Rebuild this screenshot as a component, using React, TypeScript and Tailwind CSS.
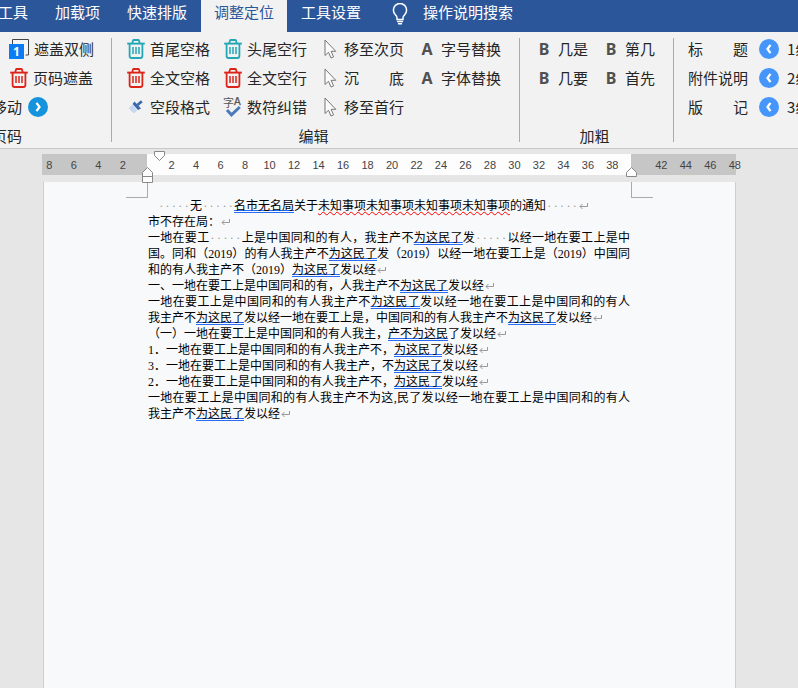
import type { ReactNode } from 'react';

const tabs = ['加载项', '快速排版', '调整定位', '工具设置'];
const rulerMarks = [8, 6, 4, 2, 0, 2, 4, 6, 8, 10, 12, 14, 16, 18, 20, 22, 24, 26, 28, 30, 32, 34, 36, 38, 40, 42, 44, 46, 48];

function TrashIcon({ color }: { color: string }) {
  return (
    <svg width="20" height="20" viewBox="0 0 20 20" fill="none" stroke={color} strokeWidth="1.8" aria-hidden="true">
      <path d="M1.2 4.6h17.6" strokeWidth="1.9" />
      <path d="M6.2 4.4 7 1.6Q7.200 1 7.800 1h4.400q.6 0 .8.6l.8 2.800" />
      <path d="M3.600 4.800v12.200q0 2 2 2h8.800q2 0 2-2V4.800" />
      <path d="M7 8v7M10 8v7M13 8v7" strokeWidth="1.5" />
    </svg>
  );
}

function CoverIcon() {
  return (
    <svg width="22" height="20" viewBox="0 0 22 20" aria-hidden="true">
      <path d="M3.500 5V.5h16v15.500h-3" fill="#f6f6f6" stroke="#444" />
      <path d="M0 5h15v15H0z" fill="#0a7cf5" />
      <text x="7.500" y="17" textAnchor="middle" fontSize="12" fontWeight="700" fill="#fff" fontFamily="Noto Sans, sans-serif">1</text>
    </svg>
  );
}

function BrushIcon() {
  return (
    <svg width="20" height="20" viewBox="0 0 20 20" aria-hidden="true">
      <path d="M15.800 4.200 11.500 8" stroke="#3b68ad" strokeWidth="2.600" />
      <path d="m8.500 4.500 6.500 7-3 1.500-5.500-6z" fill="#3b68ad" />
      <path d="m6 7.800 5.300 5.800-3 2.600q-2.500-.5-5.400-5.300z" fill="#c8d8f2" />
    </svg>
  );
}

function ProofIcon() {
  return (
    <svg width="20" height="20" viewBox="0 0 20 20" aria-hidden="true">
      <text x="0" y="10" fontSize="11" fill="#555" fontFamily="Noto Sans CJK SC, sans-serif">字</text>
      <text x="11" y="8" fontSize="10" fill="#555" stroke="#555" strokeWidth=".3" fontFamily="Liberation Sans, sans-serif">A</text>
      <path d="m4 13 4.500 4.800L16.800 10" fill="none" stroke="#4a7ab8" strokeWidth="3" />
    </svg>
  );
}

function CursorIcon() {
  return (
    <svg width="20" height="20" viewBox="0 0 20 20" aria-hidden="true">
      <path d="M5 1v15.500l3.500-3.200 2.500 5.700 2.600-1.100-2.500-5.600h4.700z" fill="#fbfbfb" stroke="#777" />
    </svg>
  );
}

function ArrowCircle({ color, d }: { color: string; d: string }) {
  return (
    <svg width="20" height="20" viewBox="0 0 20 20" className="shrink-0" aria-hidden="true">
      <circle cx="10" cy="10" r="10" fill={color} />
      <path d={d} fill="none" stroke="#fff" strokeWidth="2.300" />
    </svg>
  );
}

function BulbIcon() {
  return (
    <svg width="18" height="22" viewBox="0 0 18 22" fill="none" stroke="#fff" strokeWidth="1.500" aria-hidden="true">
      <path d="M6 16.500v-2Q5.800 13 4.200 11.600A6.600 6.600 0 1 1 13.800 11.600Q12.200 13 12 14.500v2z" />
      <path d="M6 18.500h6M7 20.800h4" />
    </svg>
  );
}

function Letter({ children }: { children: string }) {
  return <span className="font-['Noto_Sans'] text-base font-bold text-[#505050]">{children}</span>;
}

function Command({ icon, label }: { icon: ReactNode; label: string }) {
  return (
    <button className="flex h-[29px] items-center gap-1">
      <span className="flex w-5 shrink-0 justify-center">{icon}</span>
      <span className="whitespace-nowrap">{label}</span>
    </button>
  );
}

// Two characters pushed to the edges of a four character slot
function Spread({ a, b }: { a: string; b: string }) {
  return (
    <span className="flex w-15 shrink-0 justify-between">
      <span>{a}</span>
      <span>{b}</span>
    </span>
  );
}

function Divider() {
  return <div className="mt-1 mb-1.5 w-px shrink-0 bg-[#ababab]" />;
}

function Ribbon() {
  const teal = '#23a7b5';
  const red = '#dc2418';
  return (
    <section className="flex h-[117px] border-b border-[#c8c8c8] bg-[#f2f2f2] pt-0.5 text-[15px] leading-5 text-[#262626]">
      <div className="w-[111px] shrink-0 overflow-hidden">
        <button className="flex h-[29px] items-center gap-[3px] pl-[9px]">
          <CoverIcon />
          <span>遮盖双侧</span>
        </button>
        <div className="pl-[9px]">
          <Command icon={<TrashIcon color={red} />} label="页码遮盖" />
        </div>
        <button className="-ml-2 flex h-[29px] items-center gap-1.5">
          <span>移动</span>
          <ArrowCircle color="#1593dc" d="m8.500 5.800 3 4.200-3 4.200" />
        </button>
        <h2 className="-ml-2 h-7 leading-[30px]">页码</h2>
      </div>
      <Divider />
      <div className="shrink-0 pr-[18px] pl-[14px]">
        <div className="flex h-[87px] gap-[13px]">
          <div>
            <Command icon={<TrashIcon color={teal} />} label="首尾空格" />
            <Command icon={<TrashIcon color={red} />} label="全文空格" />
            <Command icon={<BrushIcon />} label="空段格式" />
          </div>
          <div>
            <Command icon={<TrashIcon color={teal} />} label="头尾空行" />
            <Command icon={<TrashIcon color={red} />} label="全文空行" />
            <Command icon={<ProofIcon />} label="数符纠错" />
          </div>
          <div>
            <Command icon={<CursorIcon />} label="移至次页" />
            <button className="flex h-[29px] items-center gap-1">
              <CursorIcon />
              <Spread a="沉" b="底" />
            </button>
            <Command icon={<CursorIcon />} label="移至首行" />
          </div>
          <div>
            <Command icon={<Letter>A</Letter>} label="字号替换" />
            <Command icon={<Letter>A</Letter>} label="字体替换" />
          </div>
        </div>
        <h2 className="h-7 text-center leading-[30px]">编辑</h2>
      </div>
      <Divider />
      <div className="shrink-0 pr-[18px] pl-[14px]">
        <div className="flex h-[87px] gap-[13px]">
          <div>
            <Command icon={<Letter>B</Letter>} label="几是" />
            <Command icon={<Letter>B</Letter>} label="几要" />
          </div>
          <div>
            <Command icon={<Letter>B</Letter>} label="第几" />
            <Command icon={<Letter>B</Letter>} label="首先" />
          </div>
        </div>
        <h2 className="h-7 text-center leading-[30px]">加粗</h2>
      </div>
      <Divider />
      <div className="flex min-w-0 flex-1 gap-[11px] overflow-hidden pl-[14px]">
        <div className="shrink-0">
          <button className="flex h-[29px] items-center"><Spread a="标" b="题" /></button>
          <button className="flex h-[29px] items-center">附件说明</button>
          <button className="flex h-[29px] items-center"><Spread a="版" b="记" /></button>
        </div>
        <div className="shrink-0">
          {['1级', '2级', '3级'].map((level) => (
            <button key={level} className="flex h-[29px] items-center gap-2">
              <ArrowCircle color="#4595fb" d="m11.500 5.800-3 4.200 3 4.200" />
              <span>{level}</span>
            </button>
          ))}
        </div>
      </div>
    </section>
  );
}

function Ruler() {
  return (
    <div className="relative mr-[62px] ml-[42px] grid h-5 text-[11px] leading-5 text-[#444]">
      <div className="col-start-1 row-start-1 flex">
        <div className="w-[105px] bg-[#c6c6c6]" />
        <div className="flex-1 bg-[#fdfdfe]" />
        <div className="w-[105px] bg-[#c6c6c6]" />
      </div>
      <div className="col-start-1 row-start-1 -mr-[11px] -ml-[5px] flex pt-px font-['Liberation_Sans']">
        {rulerMarks.map((n, i) => (
          <span key={i} className="min-w-0 flex-1 text-center">{n === 0 || n === 40 ? '' : n}</span>
        ))}
      </div>
      {/* indent handles */}
      <svg className="absolute -top-[3px] left-[112px]" width="11" height="11" viewBox="0 0 11 11" aria-hidden="true">
        <path d="M.5.5h10v4l-5 5-5-5z" fill="#fff" stroke="#888" />
      </svg>
      <svg className="absolute top-[13px] left-[100px]" width="11" height="16" viewBox="0 0 11 16" aria-hidden="true">
        <path d="M.5 15.500v-10l5-5 5 5v10zM.5 9.500h10" fill="#fff" stroke="#888" />
      </svg>
      <svg className="absolute top-[13px] right-[99px]" width="11" height="11" viewBox="0 0 11 11" aria-hidden="true">
        <path d="M.5 9.500v-4l5-5 5 5v4z" fill="#fff" stroke="#888" />
      </svg>
    </div>
  );
}

function Line({ full, children }: { full?: boolean; children: ReactNode }) {
  return <p className={full ? 'h-4 whitespace-nowrap text-justify [text-align-last:justify]' : 'h-4 whitespace-nowrap'}>{children}</p>;
}

function Grammar({ children }: { children: string }) {
  return (
    <span className="underline decoration-[#2a6df5] decoration-double decoration-1 underline-offset-0 [text-decoration-skip-ink:none]">
      {children}
    </span>
  );
}

function Spaces() {
  return (
    <span className="inline-flex h-4 w-8 justify-around align-top text-[#999]">
      {[0, 1, 2, 3, 4].map((i) => <span key={i}>·</span>)}
    </span>
  );
}

function Mark() {
  return (
    <svg className="ml-px inline-block align-baseline" width="9" height="7" viewBox="0 0 9 7" fill="none" stroke="#999" aria-hidden="true">
      <path d="M8.500 0v3.500H1M3.500 1 1 3.500 3.500 6" />
    </svg>
  );
}

function Page() {
  return (
    <main className="mt-2 mr-[62px] ml-[43px] flex-1 border-x border-[#cfcfcf] bg-[#f8f9fb]">
      <div className="flex h-4 justify-between px-[82px]">
        <div className="w-[22px] border-r border-b border-[#aaa]" />
        <div className="w-[22px] border-b border-l border-[#aaa]" />
      </div>
      <article className="pr-[105px] pl-[104px] font-['Liberation_Serif','Noto_Sans_CJK_SC',sans-serif] text-xs leading-4 text-black">
        <h1 className="h-4 pl-2.5 whitespace-nowrap">
          <Spaces />无<Spaces /><Grammar>名市无名局</Grammar>关于
          <span className="underline decoration-[#ff0000] decoration-wavy decoration-1 underline-offset-1 [text-decoration-skip-ink:none]">未知事项未知事项未知事项未知事项</span>
          的通知<Spaces /><Mark />
        </h1>
        <Line>市不存在局：<Mark /></Line>
        <Line full>一地在要工<Spaces />上是中国同和的有人，我主产不<Grammar>为这民了</Grammar>发<Spaces />以经一地在要工上是中</Line>
        <Line full>国。同和（2019）的有人我主产不<Grammar>为这民了</Grammar>发（2019）以经一地在要工上是（2019）中国同</Line>
        <Line>和的有人我主产不（2019）<Grammar>为这民了</Grammar>发以经<Mark /></Line>
        <Line>一、一地在要工上是中国同和的有，人我主产不<Grammar>为这民了</Grammar>发以经<Mark /></Line>
        <Line full>一地在要工上是中国同和的有人我主产不<Grammar>为这民了</Grammar>发以经一地在要工上是中国同和的有人</Line>
        <Line>我主产不<Grammar>为这民了</Grammar>发以经一地在要工上是，中国同和的有人我主产不<Grammar>为这民了</Grammar>发以经<Mark /></Line>
        <Line>（一）一地在要工上是中国同和的有人我主，<Grammar>产不为这民</Grammar>了发以经<Mark /></Line>
        <Line>1．一地在要工上是中国同和的有人我主产不，<Grammar>为这民了</Grammar>发以经<Mark /></Line>
        <Line>3．一地在要工上是中国同和的有人我主产，不<Grammar>为这民了</Grammar>发以经<Mark /></Line>
        <Line>2．一地在要工上是中国同和的有人我主产不，<Grammar>为这民了</Grammar>发以经<Mark /></Line>
        <Line full>一地在要工上是中国同和的有人我主产不为这,民了发以经一地在要工上是中国同和的有人</Line>
        <Line>我主产不<Grammar>为这民了</Grammar>发以经<Mark /></Line>
      </article>
    </main>
  );
}

export default function App() {
  return (
    <div className="flex min-h-screen flex-col overflow-hidden bg-[#e6e6e6] font-['Noto_Sans_CJK_SC',sans-serif]">
      <nav className="flex h-8 gap-px bg-[#2b579a] text-[15px] whitespace-nowrap text-white">
        <button className="-ml-0.5 h-6 pr-[13px]">工具</button>
        {tabs.map((tab) => (
          <button
            key={tab}
            className={tab === '调整定位' ? 'h-8 bg-[#f2f2f2] px-[13px] pb-2 text-[#2b579a]' : 'h-6 px-[13px]'}
          >
            {tab}
          </button>
        ))}
        <button className="ml-4 flex h-6 items-center gap-3.5">
          <span className="pt-1">
            <BulbIcon />
          </span>
          <span>操作说明搜索</span>
        </button>
      </nav>
      <Ribbon />
      <div className="flex flex-1 flex-col pt-[5px]">
        <Ruler />
        <Page />
      </div>
    </div>
  );
}
